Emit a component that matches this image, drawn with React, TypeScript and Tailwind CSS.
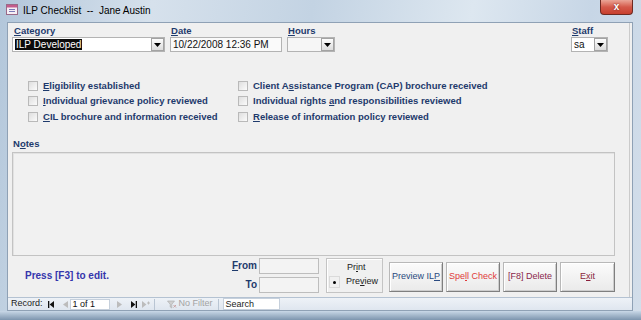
import React from 'react';

const navy = 'text-[#1e3a6c]';

function U({ children }: { children: React.ReactNode }) {
  return <span className="underline decoration-1 underline-offset-[1px]">{children}</span>;
}

function Arrow() {
  return (
    <svg width="7" height="4" viewBox="0 0 7 4">
      <path d="M0 0h7L3.5 4z" fill="#000" />
    </svg>
  );
}

function DropBtn() {
  return (
    <div className="w-[13px] h-[13px] border border-[#a3a3a3] bg-gradient-to-b from-[#fdfdfd] to-[#dcdcdc] flex items-center justify-center shrink-0">
      <Arrow />
    </div>
  );
}

function Label({ children, className = '' }: { children: React.ReactNode; className?: string }) {
  return <div className={`h-[11px] leading-[11px] text-[9.5px] font-bold ${navy} ${className}`}>{children}</div>;
}

function Check({ children }: { children: React.ReactNode }) {
  return (
    <div className="flex items-center h-[15.5px]">
      <span className="w-[10px] h-[10px] border border-[#b9b9b9] bg-gradient-to-br from-[#dedede] to-[#fbfbfb] shrink-0" />
      <span className={`ml-[5px] text-[9.5px] font-bold whitespace-nowrap ${navy}`}>{children}</span>
    </div>
  );
}

function Btn({ children, color }: { children: React.ReactNode; color: string }) {
  return (
    <div
      className={`w-[54px] h-[30px] flex items-center justify-center text-[9px] whitespace-nowrap border border-[#b8b8b8] border-r-[#7f7f7f] border-b-[#7f7f7f] shadow-[inset_1px_1px_0_#fff,inset_-1px_-1px_0_#cdcdcd] bg-gradient-to-b from-[#fbfbfb] to-[#eaeaea] ${color}`}
    >
      {children}
    </div>
  );
}

export default function App() {
  return (
    <div className="w-[641px] h-[320px] flex flex-col overflow-hidden font-['Liberation_Sans',Arial,sans-serif] bg-[linear-gradient(100deg,#b2c6da,#d6e1ec_22%,#c3d3e3_45%,#dde7f0_68%,#c7d6e6_85%,#d3deea)]">
      {/* title bar */}
      <div className="h-[22px] flex items-start shrink-0">
        <svg className="ml-[6px] mt-[4px]" width="12" height="11" viewBox="0 0 12 11">
          <rect x="0.5" y="0.5" width="11" height="10" fill="#f6eef4" stroke="#9a6a88" />
          <rect x="1" y="1" width="10" height="2.5" fill="#c45c8c" />
          <path d="M3 5.5h6M3 7.5h6" stroke="#7a7ab8" strokeWidth="1" />
        </svg>
        <span className="ml-[5px] mt-[5px] text-[10px] leading-[12px] text-black whitespace-pre">ILP Checklist  --  Jane Austin</span>
        <div className="ml-auto mr-[8px] w-[33px] h-[15px] rounded-b-[4px] border border-t-0 border-[#6e2a22] bg-gradient-to-b from-[#eaa597] via-[#d4594a] to-[#c8402e] flex items-center justify-center text-white text-[10px] font-bold leading-none [text-shadow:0_0_2px_#6a1a10]">
          x
        </div>
      </div>

      {/* client */}
      <div className="flex-1 flex pl-[7px] pr-[8px]">
        <div className="flex-1 flex flex-col border border-[#8fa1b5] bg-[#f0f0f0]">
          <div className="flex-1 flex flex-col mr-[2px] border-r border-[#cbcbcb]">
            {/* row 1 */}
            <div className="flex mt-[2px]">
              <div className="ml-[4px] w-[153px]">
                <Label className="pl-[2px]"><U>C</U>ategory</Label>
                <div className="mt-[1px] h-[15px] flex items-center border border-[#b3b3b3] bg-white">
                  <div className="flex-1 pl-[2px] text-[10px] leading-[12px]">
                    <span className="bg-[#0b0b0b] text-white px-[1px]">ILP Developed</span>
                  </div>
                  <DropBtn />
                </div>
              </div>
              <div className="ml-[5px] w-[112px]">
                <Label className="pl-[1px]"><U>D</U>ate</Label>
                <div className="mt-[1px] h-[15px] flex items-center border border-[#b3b3b3] bg-[#fafafa] pl-[2px] text-[10px] text-[#111]">
                  10/22/2008 12:36 PM
                </div>
              </div>
              <div className="ml-[5px] w-[48px]">
                <Label className="pl-[1px]"><U>H</U>ours</Label>
                <div className="mt-[1px] h-[15px] flex items-center border border-[#b3b3b3] bg-[#f6f6f6]">
                  <div className="flex-1" />
                  <DropBtn />
                </div>
              </div>
              <div className="ml-[236px] w-[37px]">
                <Label className="pl-[1px]"><U>S</U>taff</Label>
                <div className="mt-[1px] h-[15px] flex items-center border border-[#b3b3b3] bg-white">
                  <div className="flex-1 pl-[2px] text-[10px] text-[#111]">sa</div>
                  <DropBtn />
                </div>
              </div>
            </div>

            {/* checkboxes */}
            <div className="flex mt-[26px]">
              <div className="ml-[20px] w-[210px] flex flex-col">
                <Check><U>E</U>ligibility established</Check>
                <Check><U>I</U>ndividual grievance policy reviewed</Check>
                <Check><U>C</U>IL brochure and information received</Check>
              </div>
              <div className="flex flex-col">
                <Check>Client A<U>s</U>sistance Program (CAP) brochure received</Check>
                <Check>Individual rights <U>a</U>nd responsibilities reviewed</Check>
                <Check><U>R</U>elease of information policy reviewed</Check>
              </div>
            </div>

            {/* notes */}
            <Label className="mt-[13px] pl-[5px]">N<U>o</U>tes</Label>
            <div className="mt-[3px] ml-[4px] w-[603px] h-[104px] border border-[#c3c3c3] shadow-[inset_1px_1px_0_#e2e2e2] bg-[#f1f1f1]" />

            {/* bottom row */}
            <div className="mt-[2px] h-[36px] flex items-start">
              <div className="w-[221px] h-[36px] flex items-center pl-[17px] text-[10px] font-bold text-[#3535ac]">
                Press [F3] to edit.
              </div>
              <div className="flex flex-col">
                <div className="flex items-center h-[16px]">
                  <span className={`w-[28px] text-right text-[10px] font-bold ${navy}`}><U>F</U>rom</span>
                  <span className="ml-[2px] w-[60px] h-[16px] border border-[#bdbdbd] bg-[#f3f3f3]" />
                </div>
                <div className="flex items-center h-[16px] mt-[3px]">
                  <span className={`w-[28px] text-right text-[10px] font-bold ${navy}`}>To</span>
                  <span className="ml-[2px] w-[60px] h-[16px] border border-[#bdbdbd] bg-[#f3f3f3]" />
                </div>
              </div>
              <div className="ml-[7px] w-[57px] h-[35px] border border-[#c4c4c4] shadow-[inset_1px_1px_0_#fff] flex flex-col justify-center gap-[2px] pl-[2px] text-[9px] text-[#222]">
                <div className="flex items-center h-[12px]">
                  <span className="w-[11px] h-[11px]" />
                  <span className="ml-[7px]">Pr<U>i</U>nt</span>
                </div>
                <div className="flex items-center h-[13px]">
                  <span className="w-[11px] h-[12px] border border-[#dadada] flex items-center justify-center">
                    <span className="w-[3px] h-[3px] rounded-full bg-black" />
                  </span>
                  <span className="ml-[6px]">Pre<U>v</U>iew</span>
                </div>
              </div>
              <div className="ml-[6px] mt-[4px] flex gap-[3px]">
                <Btn color="text-[#2a4a80]">Preview IL<U>P</U></Btn>
                <Btn color="text-[#e03a3a]">Spe<U>l</U>l Check</Btn>
                <Btn color="text-[#8a1f4c]">[F8] Delete</Btn>
                <div className="w-[55px]">
                  <Btn color="text-[#8a1f3a] !w-[55px]">E<U>x</U>it</Btn>
                </div>
              </div>
            </div>
          </div>

          {/* record navigation */}
          <div className="h-[13px] flex items-center border-t border-[#b4c2d2] bg-gradient-to-b from-[#eef2f7] to-[#dfe6ef] text-[9px] text-[#222] shrink-0">
            <span className="ml-[3px]">Record:</span>
            <svg className="ml-[5px]" width="6" height="7" viewBox="0 0 6 7">
              <rect width="1.3" height="7" fill="#111" />
              <path d="M6 0v7L1.6 3.5z" fill="#111" />
            </svg>
            <svg className="ml-[9px]" width="5" height="7" viewBox="0 0 5 7">
              <path d="M5 0v7L0 3.5z" fill="#bcbcbc" />
            </svg>
            <span className="ml-[2px] w-[40px] h-[11px] bg-white border border-[#c6d0dc] pl-[2px] leading-[9px] text-[#111]">1 of 1</span>
            <svg className="ml-[7px]" width="5" height="7" viewBox="0 0 5 7">
              <path d="M0 0v7l5-3.5z" fill="#bcbcbc" />
            </svg>
            <svg className="ml-[9px]" width="6" height="7" viewBox="0 0 6 7">
              <path d="M0 0v7l4.4-3.5z" fill="#111" />
              <rect x="4.7" width="1.3" height="7" fill="#111" />
            </svg>
            <svg className="ml-[5px]" width="8" height="7" viewBox="0 0 8 7">
              <path d="M0 0v7l4.4-3.5z" fill="#bcbcbc" />
              <path d="M6.5 0.5v3M5 2h3" stroke="#bcbcbc" strokeWidth="1" />
            </svg>
            <span className="ml-[4px] w-px h-[11px] bg-[#b9c5d3]" />
            <svg className="ml-[12px]" width="10" height="9" viewBox="0 0 10 9">
              <path d="M0.5 1h7L4.8 4.3V8L3.2 7V4.3z" fill="#d0d0d0" stroke="#a9a9a9" strokeWidth="0.6" />
              <path d="M6.5 5l2.5 2.5M9 5L6.5 7.5" stroke="#c9a3a3" strokeWidth="1" />
            </svg>
            <span className="ml-[2px] text-[#a3a3a3]">No Filter</span>
            <span className="ml-[5px] w-px h-[11px] bg-[#b9c5d3]" />
            <span className="ml-[4px] w-[57px] h-[12px] bg-white border border-[#c6d0dc] pl-[2px] leading-[10px] text-[#222]">Search</span>
          </div>
        </div>
      </div>
      <div className="h-[9px] shrink-0 bg-gradient-to-b from-[#c9d8e7] to-[#7d95ae]" />
    </div>
  );
}
